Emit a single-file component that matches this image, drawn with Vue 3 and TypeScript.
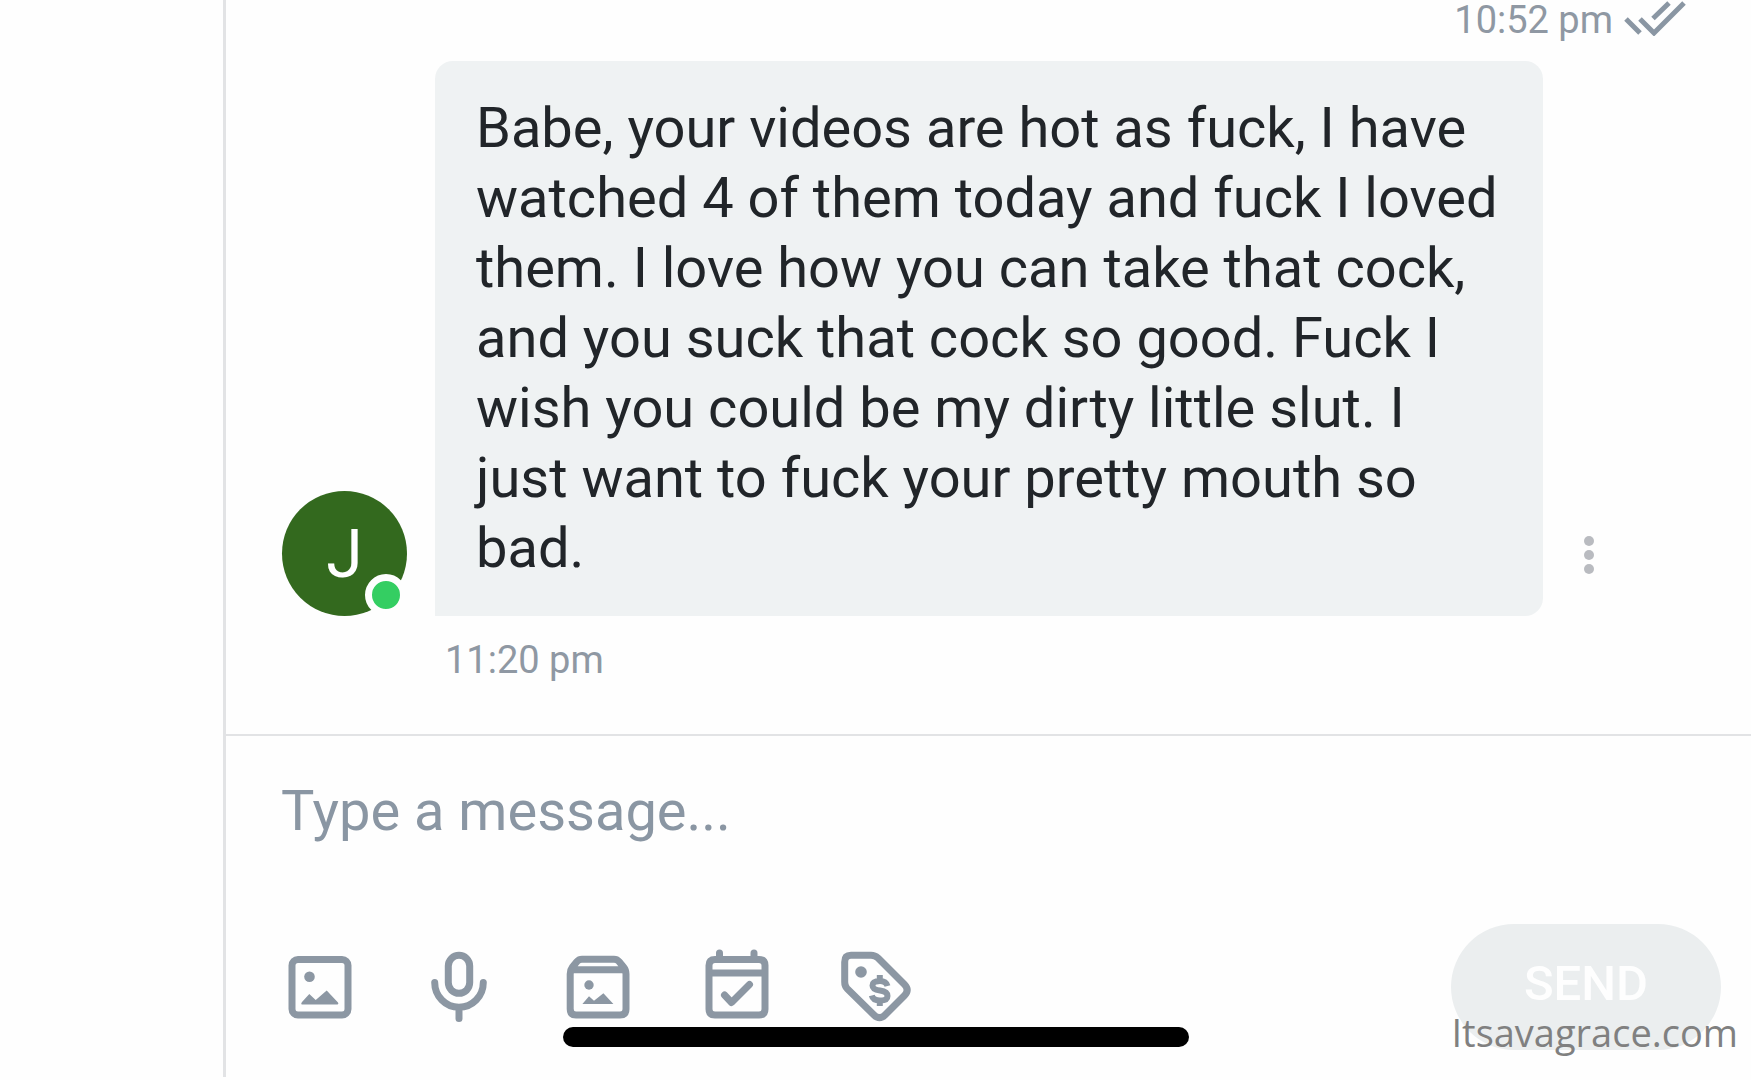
<script setup lang="ts">
import { ref } from 'vue'

interface Message {
  initial: string
  text: string
  time: string
}

const previousTime = '10:52 pm'
const message: Message = {
  initial: 'J',
  text: 'Babe, your videos are hot as fuck, I have watched 4 of them today and fuck I loved them. I love how you can take that cock, and you suck that cock so good. Fuck I wish you could be my dirty little slut. I just want to fuck your pretty mouth so bad.',
  time: '11:20 pm',
}
const draft = ref('')
</script>

<template>
  <div class="app">
    <aside class="side"></aside>
    <main class="chat">
      <section class="messages">
        <div class="sent-meta">
          <time>{{ previousTime }}</time>
          <svg class="ticks" viewBox="0 0 64 36" aria-label="Read">
            <path d="M3 19 17 33M17 19 31 33 61 3M46 3 30 18.500" />
          </svg>
        </div>
        <div class="row">
          <div class="avatar">
            {{ message.initial }}
            <span class="online"></span>
          </div>
          <p class="bubble">{{ message.text }}</p>
          <button class="more" type="button" aria-label="Message options">
            <i></i><i></i><i></i>
          </button>
        </div>
        <time class="received-time">{{ message.time }}</time>
      </section>

      <form class="composer" @submit.prevent>
        <textarea v-model="draft" class="draft" rows="1" aria-label="Message" placeholder="Type a message..."></textarea>
        <div class="actions">
          <div class="tools">
            <button class="tool" type="button" aria-label="Add image">
              <svg viewBox="0 0 70 70">
                <rect x="7" y="7.500" width="56" height="55.500" rx="6" />
                <circle class="solid" cx="24.500" cy="24.700" r="5.300" />
                <path class="solid" d="M17 52.500Q15.500 52 17 50L24.300 42 30.700 48 41.700 38.500 53 50.500Q54 52 52.500 52.500Z" />
              </svg>
            </button>
            <button class="tool" type="button" aria-label="Record voice">
              <svg viewBox="0 0 70 70">
                <rect x="24.300" y="3.300" width="21.400" height="38" rx="10.700" />
                <path d="M10.700 30.500a24.300 24.800 0 0 0 48.600 0M35 55.500V66.500" />
              </svg>
            </button>
            <button class="tool" type="button" aria-label="Add from vault">
              <svg viewBox="0 0 70 70">
                <path d="M7.200 22Q7.200 18 9.500 15L14 9.500Q16 7.300 19 7.300H51Q54 7.300 56 9.500L60.500 15Q63 18 63 22V57Q63 63 57 63H13Q7.200 63 7.200 57ZM9 17.700H61" />
                <circle class="solid" cx="26" cy="33" r="4.700" />
                <path class="solid" d="M19.400 52 26 44.300 31 48.700 40.400 41.300 50.400 52Z" />
              </svg>
            </button>
            <button class="tool" type="button" aria-label="Schedule message">
              <svg viewBox="0 0 70 70">
                <path d="M13 7.500H57Q63 7.500 63 13.500V57Q63 63 57 63H13Q7 63 7 57V13.500Q7 7.500 13 7.500ZM7 21H63M17.500 1V7M52 1V7" />
                <path d="M22.500 43 29.500 50.500 47.500 32.500" />
              </svg>
            </button>
            <button class="tool" type="button" aria-label="Set price">
              <svg viewBox="0 0 70 70">
                <path d="M10 3.300H30Q34 3.300 37 6L63.500 32.500Q69 38 63.500 43.500L44 63Q38.500 68.500 33 63L6 36.500Q3.700 34 3.700 30V10Q3.700 3.300 10 3.300Z" />
                <circle class="solid" cx="20" cy="20" r="5.800" />
                <path class="dollar" d="M46.500 34Q45 29 39 29Q31.500 29 31.500 33.500Q31.500 37.500 39 38.500Q46.500 39.500 46.500 44Q46.500 48.500 39 48.500Q32 48.500 30.800 43.500M38.800 23V29M38.800 48.500V54" />
              </svg>
            </button>
          </div>
          <button class="send" type="submit" disabled>SEND</button>
        </div>
      </form>
    </main>
    <div class="home-bar"></div>
    <div class="watermark">Itsavagrace.com</div>
  </div>
</template>

<style>
body {
  margin: 0;
  background: #fefefe;
}
</style>

<style scoped>
.app {
  position: relative;
  box-sizing: border-box;
  display: flex;
  min-height: 100vh;
  padding-bottom: 3px;
  font-family: Roboto, "Liberation Sans", sans-serif;
  color: #212529;
}
button {
  padding: 0;
  border: 0;
  background: none;
  font-family: inherit;
}
.side {
  flex: 0 0 223px;
}
.chat {
  flex: 1;
  min-width: 0;
  display: flex;
  flex-direction: column;
  border-left: 3px solid #e2e3e5;
}
.messages {
  flex: 1;
}
.sent-meta {
  display: flex;
  justify-content: flex-end;
  gap: 10px;
  height: 61px;
  padding-right: 64px;
}
time {
  font-size: 38px;
  line-height: 40px;
  color: #8f98a3;
}
.ticks {
  width: 64px;
  height: 36px;
  fill: none;
  stroke: #8a96a3;
  stroke-width: 5;
}
.row {
  display: flex;
  align-items: flex-end;
  padding: 0 142px 0 56px;
}
.avatar {
  position: relative;
  flex: none;
  width: 125px;
  height: 125px;
  margin-right: 28px;
  border-radius: 50%;
  background: #33691e;
  color: #fff;
  font-size: 66px;
  line-height: 127px;
  text-align: center;
}
.online {
  position: absolute;
  right: 0;
  bottom: 0;
  width: 28px;
  height: 28px;
  border: 7px solid #fefefe;
  border-radius: 50%;
  background: #34ce62;
}
.bubble {
  flex: 1;
  margin: 0;
  padding: 32px 40px 33px 41px;
  border-radius: 18px 18px 18px 0;
  background: #eff2f3;
  font-size: 56px;
  line-height: 70px;
}
.more {
  display: flex;
  flex-direction: column;
  align-items: center;
  justify-content: center;
  gap: 4px;
  width: 40px;
  height: 122px;
  margin-left: 26px;
}
.more i {
  width: 10px;
  height: 10px;
  border-radius: 50%;
  background: #b9bbc0;
}
.received-time {
  display: block;
  margin: 24px 0 0 219px;
}
.composer {
  padding: 42px 30px 27px 55px;
  border-top: 2px solid #e2e3e5;
}
.draft {
  display: block;
  box-sizing: border-box;
  width: 100%;
  height: 146px;
  padding: 0;
  border: 0;
  outline: 0;
  resize: none;
  background: none;
  font-family: inherit;
  font-size: 56px;
  line-height: 66px;
  color: inherit;
}
.draft::placeholder {
  color: #8a96a3;
  opacity: 1;
}
.actions {
  display: flex;
  align-items: center;
  justify-content: space-between;
}
.tools {
  display: flex;
  gap: 69px;
  margin-left: 4px;
}
.tool {
  width: 70px;
  height: 70px;
}
.tool svg {
  display: block;
  overflow: visible;
  fill: none;
  stroke: #8c97a3;
  stroke-width: 7;
  stroke-linecap: round;
  stroke-linejoin: round;
}
.tool .solid {
  fill: #8c97a3;
  stroke: none;
}
.tool .dollar {
  stroke-width: 6;
  stroke-linecap: butt;
}
.send {
  width: 270px;
  height: 126px;
  padding-bottom: 8px;
  border-radius: 63px;
  background: #ebeeef;
  color: #fefefe;
  font-size: 49px;
  font-weight: 500;
}
.home-bar {
  position: absolute;
  left: 50%;
  bottom: 33px;
  width: 626px;
  height: 20px;
  margin-left: -313px;
  border-radius: 10px;
  background: #000;
}
.watermark {
  position: absolute;
  right: 13px;
  bottom: 24px;
  font-family: "Open Sans", sans-serif;
  font-size: 38px;
  line-height: 48px;
  color: #808080;
}
</style>
